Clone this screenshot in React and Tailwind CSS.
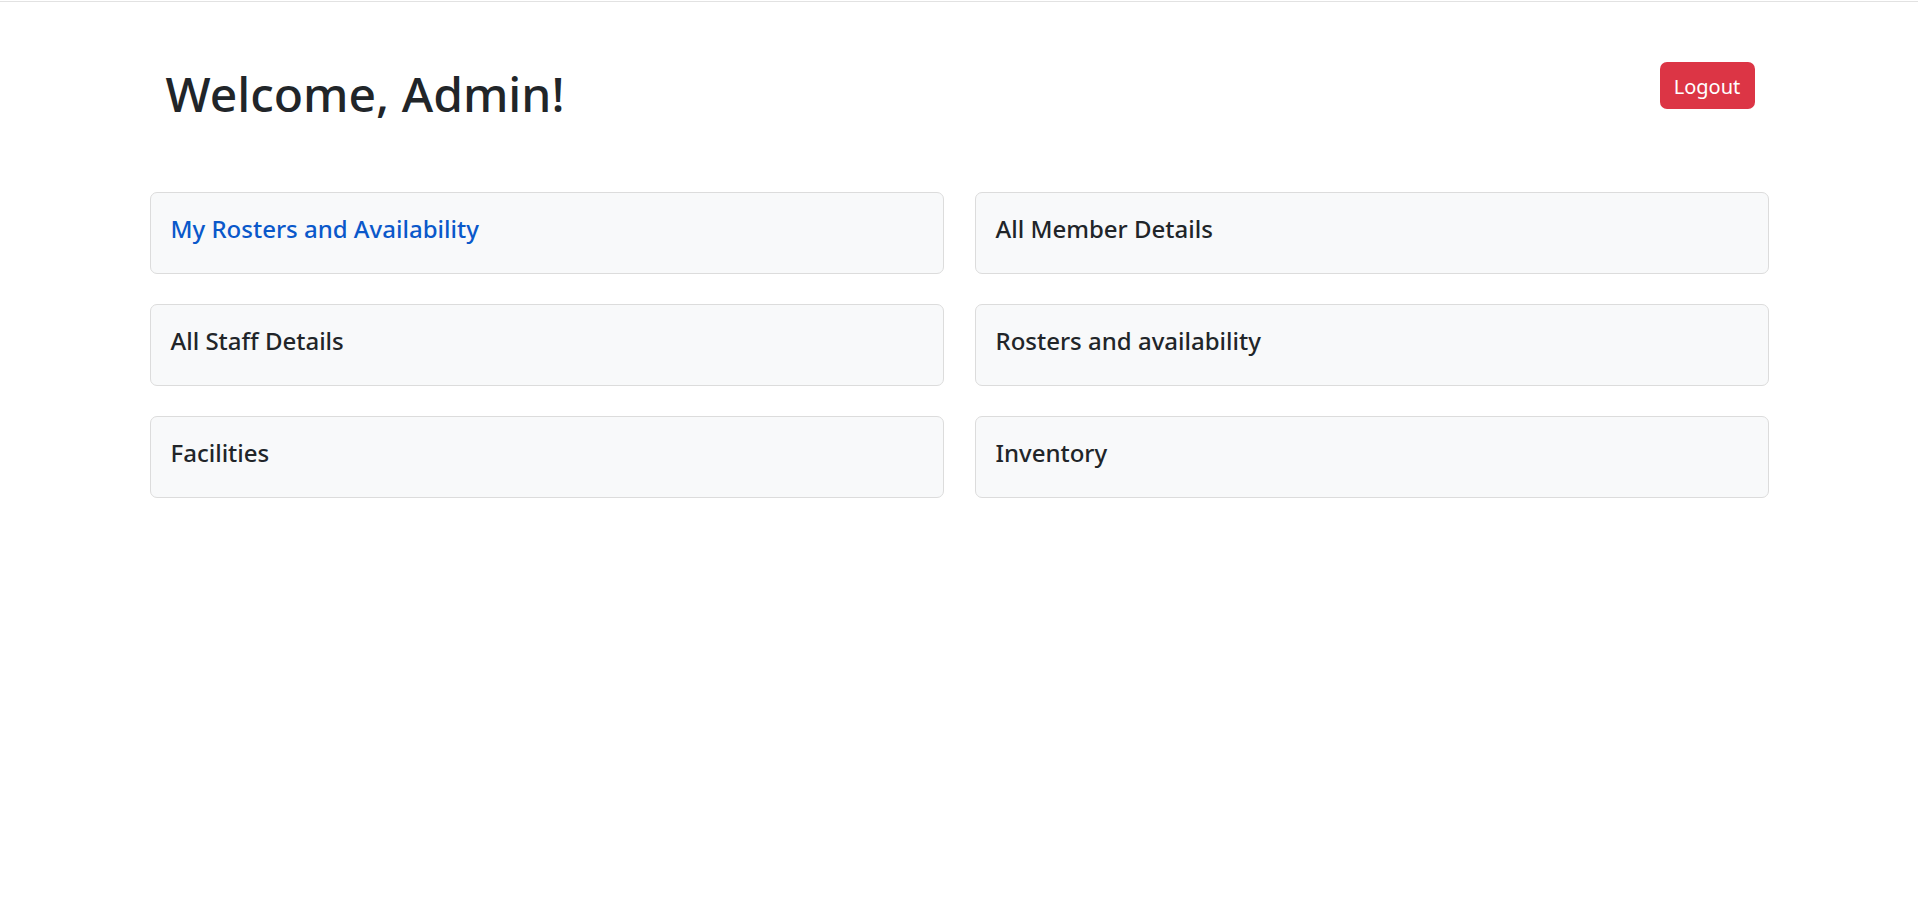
const TILES = [
  { label: 'My Rosters and Availability', active: true },
  { label: 'All Member Details' },
  { label: 'All Staff Details' },
  { label: 'Rosters and availability' },
  { label: 'Facilities' },
  { label: 'Inventory' },
]

function Tile({ label, active }) {
  return (
    <div className="rounded-[7px] border border-[#dcdcdc] bg-[#f8f9fa] px-5 pt-[21px] pb-[29px]">
      <h5
        className={`text-[24px] leading-[30px] font-medium ${
          active ? 'text-[#0a58ca]' : 'text-[#212529]'
        }`}
      >
        {label}
      </h5>
    </div>
  )
}

export default function App() {
  return (
    <div className="min-h-screen bg-white font-['Noto_Sans',_'Open_Sans',_sans-serif] text-[#212529]">
      <div className="h-[2px] border-b border-[#e2e2e2]" />
      <div className="mx-auto w-[1619px]">
        <div className="flex items-start justify-between pl-[16px] pr-[14px] pt-[60px]">
          <h1 className="mt-[2px] text-[48px] leading-[60px] font-medium">
            Welcome, Admin!
          </h1>
          <button
            type="button"
            className="h-[47px] w-[95px] rounded-[7px] bg-[#dc3545] pt-[2px] text-[20px] leading-none text-white"
          >
            Logout
          </button>
        </div>
        <div className="mt-[68px] grid grid-cols-2 gap-x-[31px] gap-y-[30px]">
          {TILES.map((t) => (
            <Tile key={t.label} {...t} />
          ))}
        </div>
      </div>
    </div>
  )
}
